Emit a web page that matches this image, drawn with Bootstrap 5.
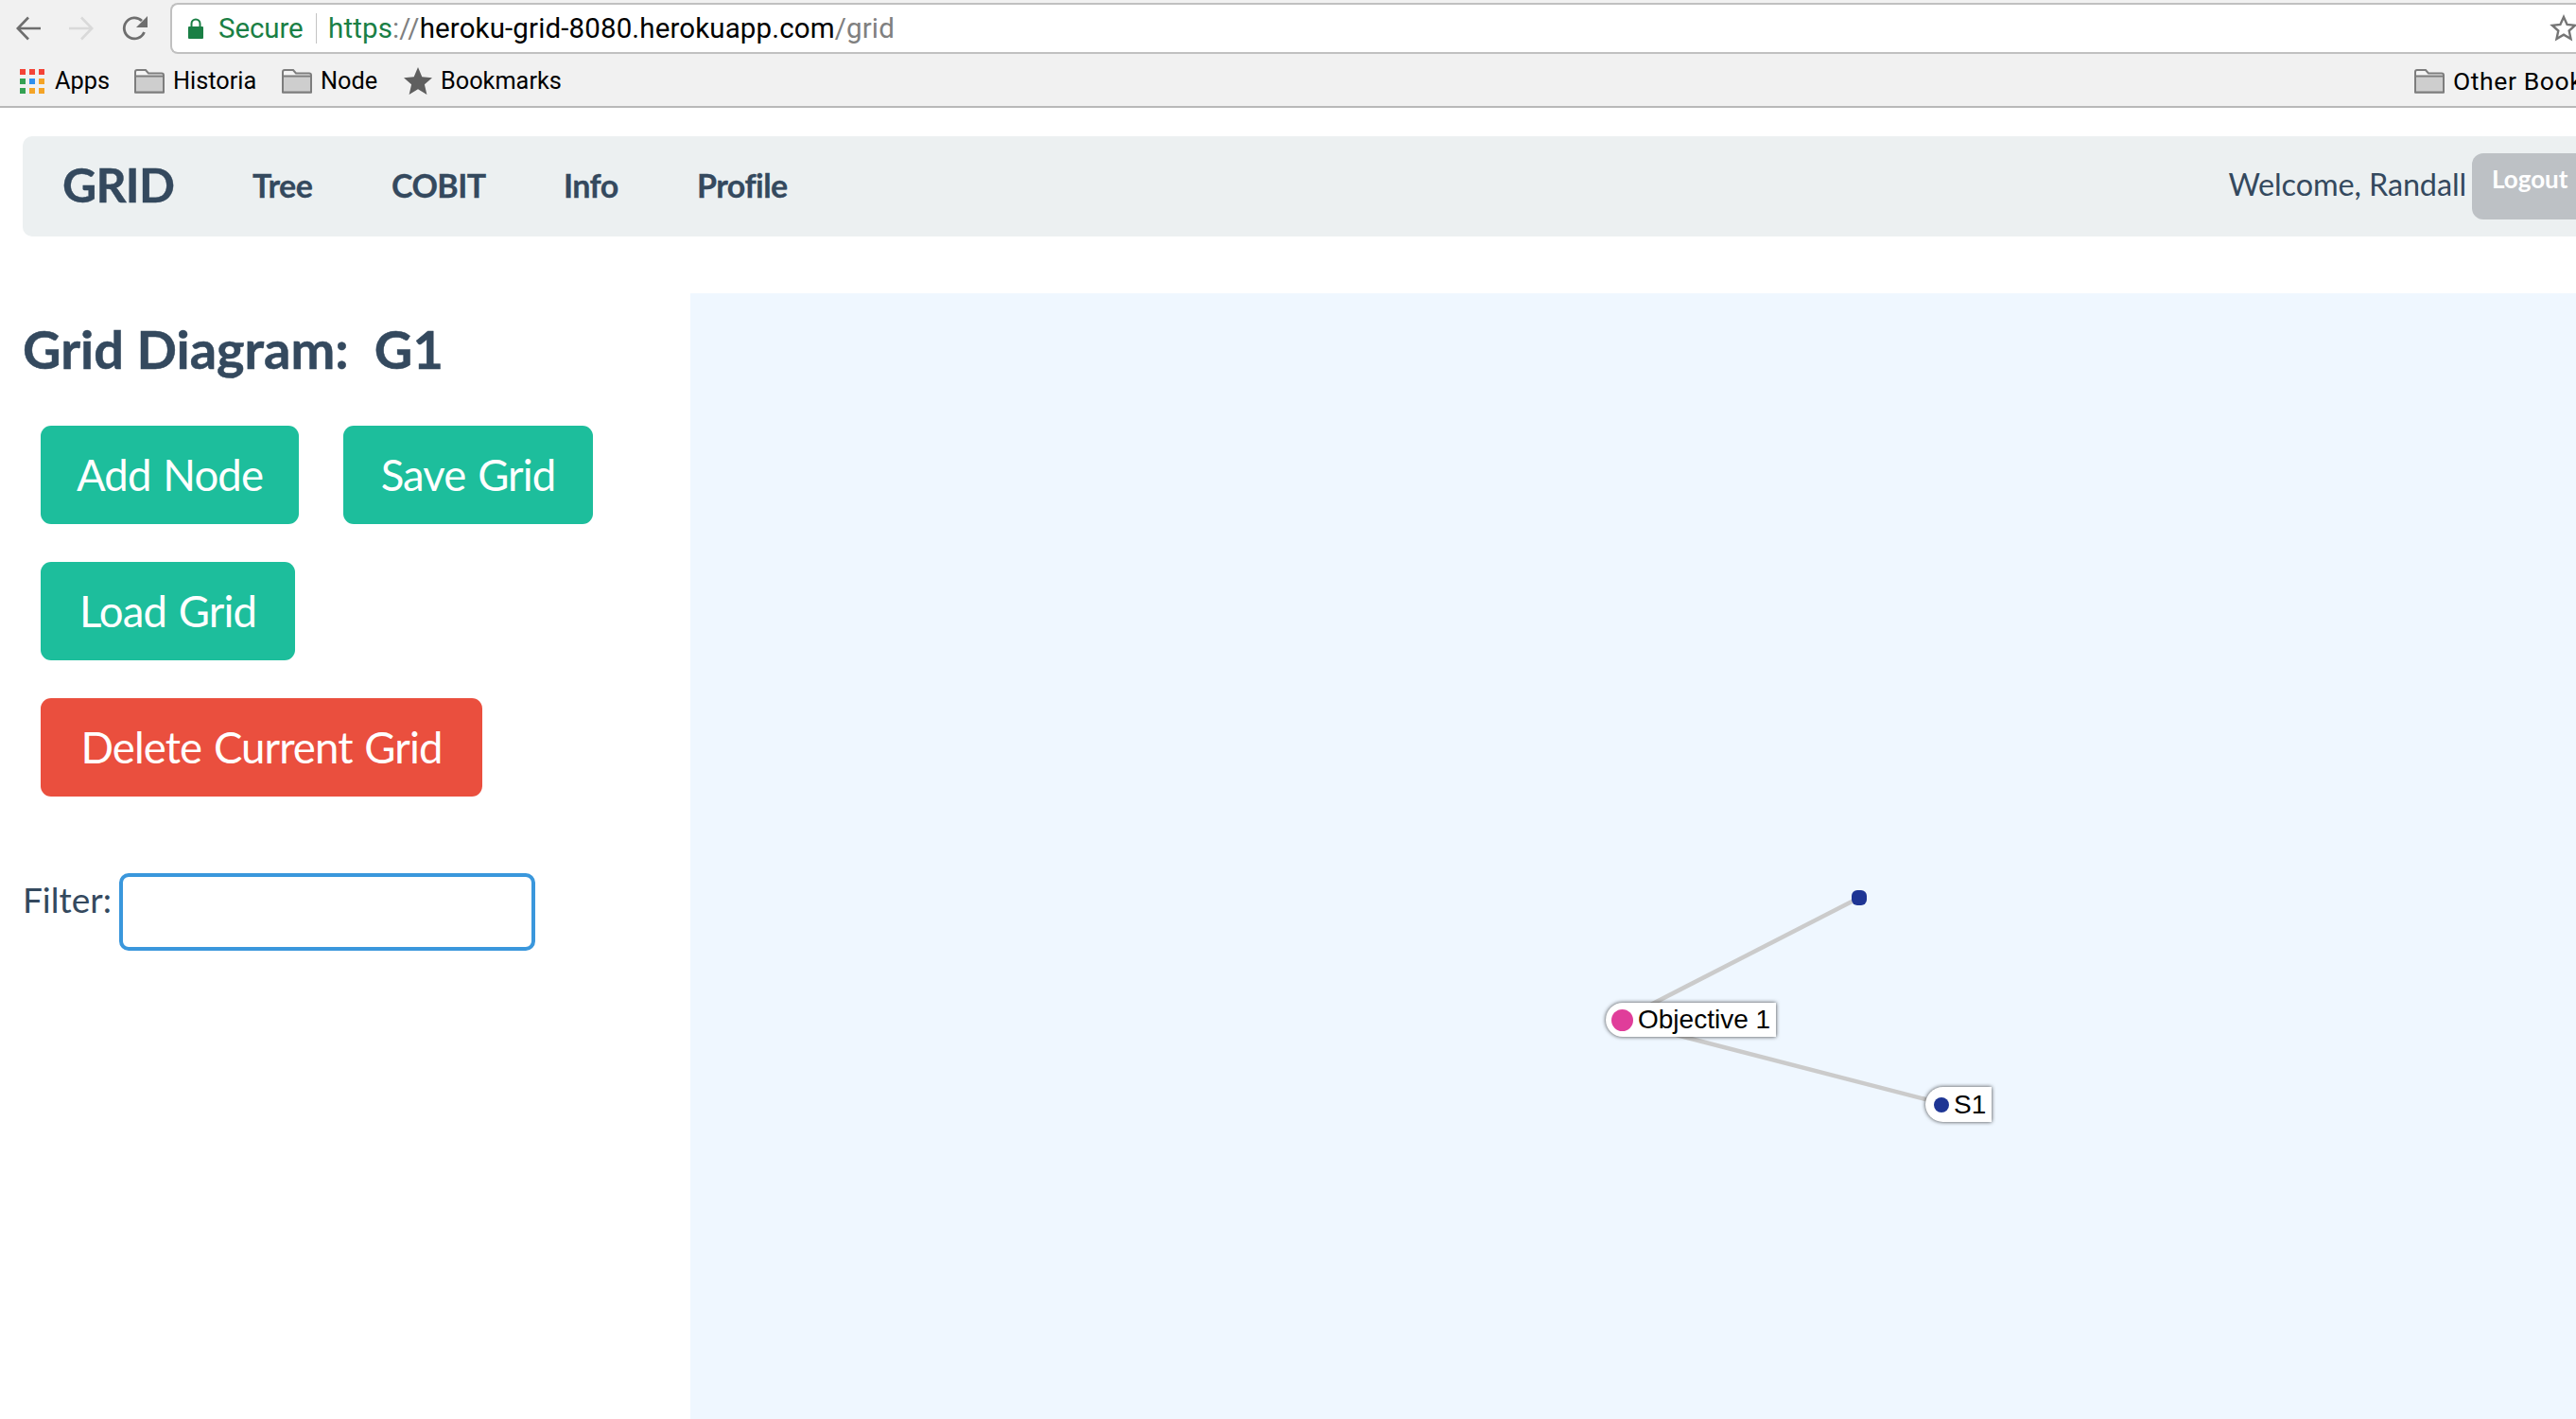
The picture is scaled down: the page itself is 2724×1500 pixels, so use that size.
<!DOCTYPE html>
<html lang="en">
<head>
<meta charset="utf-8">
<title>Grid</title>
<link rel="stylesheet" href="https://cdn.jsdelivr.net/npm/bootstrap@5.3.0/dist/css/bootstrap.min.css">
<style>
html,body{height:1500px;overflow:hidden;background:#fff}
body{font-family:"Lato","Liberation Sans",sans-serif;color:#34495e}
.chrome-bar{height:114px;background:#f1f1f1;border-bottom:2px solid #b8b8b8;font-family:"Liberation Sans",sans-serif}
.chrome-bar svg{flex:none}
.tool-row{height:60px;padding-left:17px}
.ic-gap{margin-left:30px}
.addr{height:54px;margin-left:23px;flex:1;margin-right:-8px;background:#fff;border:2px solid #c0c0c0;border-right:0;border-radius:8px 0 0 8px;padding-left:17px;font-family:"Roboto",sans-serif;font-size:29.5px;white-space:nowrap}
.sec{color:#1a7f45;margin-left:16px;width:103px;letter-spacing:-.1px}
.sep{width:1px;height:32px;background:#c4c4c4;margin-right:12px}
.u-g{color:#1a7f45}.u-k{color:#000}.u-m{color:#808080}
.u-text{letter-spacing:.13px}
.star-o{margin-right:6px}
.mark-row{height:52px;padding-left:21px;font-size:25.3px;color:#000;font-family:"Roboto",sans-serif;white-space:nowrap}
.mark-item{display:flex;align-items:center;gap:9px}
.m1{width:121px}.m2{width:156px}.m3{width:129px}
.apps-i{margin-right:2px}
.other-marks{margin-right:-80px;width:251px;flex:none}
.other-t{font-size:26.5px;letter-spacing:.6px}
.top-nav{margin:30px -60px 0 24px;height:106px;background:#ecf0f1;border-radius:10px;padding:0 0 3px 42px;white-space:nowrap;display:flex;flex-wrap:nowrap;align-items:center;justify-content:flex-start}
.brand-t{font-size:50px;font-weight:700;color:#34495e;width:201px;letter-spacing:-.8px;-webkit-text-stroke:.4px #34495e}
.nav-t{font-size:34px;font-weight:700;color:#34495e;text-decoration:none;letter-spacing:-.55px;-webkit-text-stroke:.3px #34495e}
.n1{width:147px}.n2{width:182px}.n3{width:141px}
.welcome-t{font-size:32.4px;color:#34495e;margin-left:auto;letter-spacing:-.1px;margin-top:-1px}
.logout-b{width:170px;height:70px;margin:3px 0 0 6px;background:#bdc1c5;color:#fff;border:0;border-radius:12px;font-size:26px;font-weight:700;padding:0 0 15px 21px;text-align:left;--bs-btn-hover-bg:#bdc1c5;--bs-btn-hover-color:#fff;--bs-btn-active-bg:#bdc1c5;--bs-btn-active-color:#fff}
.work{height:1190px;margin-top:60px}
.side{width:730px;flex:none;padding-left:24px}
.side-h{font-size:55.9px;font-weight:700;line-height:70px;color:#34495e;margin:24px 0 0;white-space:pre;-webkit-text-stroke:.5px #34495e}
.act{height:104px;font-size:45.5px;font-family:"Lato",sans-serif;line-height:1;border:0;border-radius:11px;color:#fff;padding:0;letter-spacing:-.9px;word-spacing:2px;--bs-btn-hover-color:#fff;--bs-btn-active-color:#fff}
.act-g{background:#1dbe9c;--bs-btn-hover-bg:#1dbe9c;--bs-btn-active-bg:#1dbe9c}
.act-r{background:#ea4f3e;--bs-btn-hover-bg:#ea4f3e;--bs-btn-active-bg:#ea4f3e}
.w1{width:273px}.w2{width:264px}.w3{width:269px}.w4{width:467px}
.btn-rows{padding-left:19px;margin-top:46px;display:flex;flex-direction:column;gap:40px}
.btn-line{gap:47px}
.filter-l{font-size:37px;margin:0 8px 26px 0;color:#34495e}
.filter-line{margin-top:81px}
.filter-i{width:440px;height:82px;flex:none;border:4px solid #3a97dc;border-radius:10px;background:#fff;box-shadow:none}
.canvas-a{flex:1;position:relative;background:#eff7ff;min-width:0}
.canvas-a svg{position:absolute;left:0;top:0}
.g-node{position:absolute;display:flex;align-items:center;background:#fff;border-radius:19px 0 0 19px;box-shadow:0 0 4px rgba(0,0,0,.75);font-family:"Liberation Sans",sans-serif;font-size:28px;color:#000;line-height:1;white-space:nowrap}
.n-obj{left:968px;top:750px;width:180px;height:36px;padding-left:6px}
.n-s1{left:1306px;top:839px;width:70px;height:37px;padding-left:9px}
.g-dot{border-radius:50%;flex:none}
.d-pink{width:23px;height:23px;background:#e03d9a;margin-right:5px}
.d-blue{width:16px;height:16px;background:#1e3594;margin-right:5px}
.d-free{position:absolute;left:1228px;top:631px;width:16px;height:16px;background:#1e3594;border-radius:6px}
</style>
</head>
<body>
<div class="chrome-bar">
  <div class="tool-row d-flex align-items-center">
    <svg width="26" height="26" viewBox="0 0 26 26" fill="none" stroke="#6e6e6e" stroke-width="2.6"><path d="M26 13H2M13 1.500 1.800 13 13 24.500"/></svg>
    <svg class="ic-gap" width="26" height="26" viewBox="0 0 26 26" fill="none" stroke="#d9d9d9" stroke-width="2.6"><path d="M0 13h24M13 1.500 24.200 13 13 24.500"/></svg>
    <svg class="ic-gap" width="28" height="28" viewBox="0 0 28 28" fill="none"><path d="M23.500 18A11 11 0 1 1 21 6" stroke="#6e6e6e" stroke-width="2.8"/><path d="M27 1v12H15z" fill="#6e6e6e"/></svg>
    <div class="addr d-flex align-items-center">
      <svg width="16" height="22" viewBox="0 0 16 22"><path d="M0 10a1 1 0 0 1 1-1h14a1 1 0 0 1 1 1v11a1 1 0 0 1-1 1H1a1 1 0 0 1-1-1z" fill="#1a7f45"/><path d="M3.500 9V6a4.500 4.500 0 0 1 9 0v3" fill="none" stroke="#1a7f45" stroke-width="2"/></svg>
      <span class="sec">Secure</span>
      <span class="sep"></span>
      <span class="u-text"><span class="u-g">https</span><span class="u-m">://</span><span class="u-k">heroku-grid-8080.herokuapp.com</span><span class="u-m">/grid</span></span>
      <svg class="ms-auto star-o" width="30" height="30" viewBox="0 0 30 30"><path d="M15 3l3.600 8 8.400.9-6.300 5.600 1.800 8.500L15 21.600 7.500 26l1.800-8.500L3 11.900l8.400-.9z" fill="none" stroke="#757575" stroke-width="2.4"/></svg>
    </div>
  </div>
  <div class="mark-row d-flex align-items-center">
    <div class="mark-item m1">
      <svg class="apps-i" width="26" height="26" viewBox="0 0 26 26"><g fill="#f44336"><rect width="6" height="6"/><rect x="10" width="6" height="6"/><rect x="20" width="6" height="6"/></g><rect y="10" width="6" height="6" fill="#34a153"/><rect x="10" y="10" width="6" height="6" fill="#2e8fee"/><rect x="20" y="10" width="6" height="6" fill="#f4a427"/><rect y="20" width="6" height="6" fill="#34a153"/><rect x="10" y="20" width="6" height="6" fill="#f4a427"/><rect x="20" y="20" width="6" height="6" fill="#f4a427"/></svg>
      <span>Apps</span>
    </div>
    <div class="mark-item m2">
      <svg width="32" height="26" viewBox="0 0 32 26"><use href="#fold"/></svg><span>Historia</span>
    </div>
    <div class="mark-item m3">
      <svg width="32" height="26" viewBox="0 0 32 26"><use href="#fold"/></svg><span>Node</span>
    </div>
    <div class="mark-item">
      <svg width="30" height="30" viewBox="0 0 30 30"><path d="M15 0l4.300 10.300 10.700.9-8.100 7.100 2.500 10.700L15 23.300 5.600 29l2.500-10.700L0 11.200l10.700-.9z" fill="#5f5f5f"/></svg><span>Bookmarks</span>
    </div>
    <div class="mark-item other-marks ms-auto">
      <svg width="32" height="26" viewBox="0 0 32 26"><defs><g id="fold"><path d="M1 24.500V3a2 2 0 0 1 2-2h9l3 3.500h14a2 2 0 0 1 2 2v18z" fill="#f4f4f4" stroke="#7d7d7d" stroke-width="2"/><rect x="2" y="8" width="28" height="16" fill="#cecece"/><path d="M1 7.500h30M1 24.500h30" stroke="#7d7d7d" stroke-width="2"/></g></defs><use href="#fold"/></svg><span class="other-t">Other Bookmarks</span>
    </div>
  </div>
</div>

<nav class="top-nav navbar">
  <a class="brand-t navbar-brand m-0 p-0" href="#">GRID</a>
  <a class="nav-t n1" href="#">Tree</a>
  <a class="nav-t n2" href="#">COBIT</a>
  <a class="nav-t n3" href="#">Info</a>
  <a class="nav-t" href="#">Profile</a>
  <span class="welcome-t">Welcome, Randall</span>
  <button type="button" class="btn logout-b">Logout</button>
</nav>

<div class="work d-flex">
  <div class="side">
    <h3 class="side-h">Grid Diagram:  G1</h3>
    <div class="btn-rows">
      <div class="btn-line d-flex">
        <button type="button" class="btn act act-g w1">Add Node</button>
        <button type="button" class="btn act act-g w2">Save Grid</button>
      </div>
      <div class="d-flex"><button type="button" class="btn act act-g w3">Load Grid</button></div>
      <div class="d-flex"><button type="button" class="btn act act-r w4">Delete Current Grid</button></div>
    </div>
    <div class="filter-line d-flex align-items-center">
      <label class="filter-l" for="flt">Filter:</label>
      <input id="flt" class="filter-i" type="text">
    </div>
  </div>
  <div class="canvas-a">
    <svg width="1994" height="1190" viewBox="0 0 1994 1190" fill="none" stroke="#cbcbcb" stroke-width="4.5">
      <line x1="1236" y1="639" x2="1000" y2="760"/>
      <line x1="1310" y1="853" x2="1000" y2="773"/>
    </svg>
    <div class="d-free"></div>
    <div class="g-node n-obj"><span class="g-dot d-pink"></span>Objective 1</div>
    <div class="g-node n-s1"><span class="g-dot d-blue"></span>S1</div>
  </div>
</div>
</body>
</html>
